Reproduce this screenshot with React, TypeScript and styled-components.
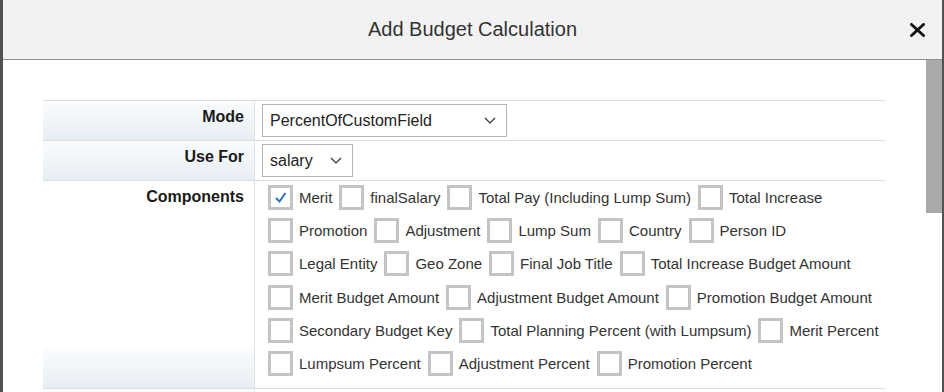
import styled, { createGlobalStyle } from "styled-components";

type Component = {
  name: string;
  checked?: boolean;
};

const components: Component[] = [
  { name: "Merit", checked: true },
  { name: "finalSalary" },
  { name: "Total Pay (Including Lump Sum)" },
  { name: "Total Increase" },
  { name: "Promotion" },
  { name: "Adjustment" },
  { name: "Lump Sum" },
  { name: "Country" },
  { name: "Person ID" },
  { name: "Legal Entity" },
  { name: "Geo Zone" },
  { name: "Final Job Title" },
  { name: "Total Increase Budget Amount" },
  { name: "Merit Budget Amount" },
  { name: "Adjustment Budget Amount" },
  { name: "Promotion Budget Amount" },
  { name: "Secondary Budget Key" },
  { name: "Total Planning Percent (with Lumpsum)" },
  { name: "Merit Percent" },
  { name: "Lumpsum Percent" },
  { name: "Adjustment Percent" },
  { name: "Promotion Percent" },
];

const Chevron = () => (
  <svg width="12" height="7" viewBox="0 0 12 7">
    <path d="M1 1 L6 6 L11 1" fill="none" stroke="#333" strokeWidth="1.2" />
  </svg>
);

const CloseIcon = () => (
  <svg width="15" height="14" viewBox="0 0 15 14">
    <path
      d="M1.5 1.5 L13.5 12.5 M13.5 1.5 L1.5 12.5"
      stroke="#111"
      strokeWidth="2.8"
      strokeLinecap="square"
    />
  </svg>
);

const Select = ({ value, width }: { value?: string; width: number }) => (
  <SelectBox $width={width}>
    <span>{value}</span>
    {value && <Chevron />}
  </SelectBox>
);

const App = () => {
  return (
    <>
      <GlobalStyle />
      <Page>
        <Edge $width={3} />
        <Dialog>
          <Header>
            <span />
            <Title>Add Budget Calculation</Title>
            <CloseButton aria-label="Close">
              <CloseIcon />
            </CloseButton>
          </Header>
          <Body>
            <Content>
              <Form>
                <Label>Mode</Label>
                <Value>
                  <Select value="PercentOfCustomField" width={245} />
                </Value>
                <Label>Use For</Label>
                <Value>
                  <Select value="salary" width={91} />
                </Value>
                <Label>Components</Label>
                <Value $tall>
                  <CheckList>
                    {components.map((c) => (
                      <CheckItem key={c.name}>
                        <Box>
                          {c.checked && (
                            <svg width="19" height="19" viewBox="0 0 19 19">
                              <path
                                d="M5 10 L8.5 13.5 L14.5 5"
                                fill="none"
                                stroke="#2f6fb5"
                                strokeWidth="2"
                              />
                            </svg>
                          )}
                        </Box>
                        {c.name}
                      </CheckItem>
                    ))}
                  </CheckList>
                </Value>
                <Label $plain />
                <Value>
                  <Select width={184} />
                </Value>
              </Form>
            </Content>
            <Scrollbar>
              <Thumb />
            </Scrollbar>
          </Body>
        </Dialog>
        <Edge $width={2} />
      </Page>
    </>
  );
};

const GlobalStyle = createGlobalStyle`
  body {
    margin: 0;
    font-family: "Liberation Sans", Arial, sans-serif;
  }
`;

const Page = styled.div`
  display: flex;
  width: 944px;
  height: 392px;
  overflow: hidden;
  background: #565656;
`;

const Edge = styled.div<{ $width: number }>`
  width: ${({ $width }) => $width}px;
  flex-shrink: 0;
  background: #525252;
`;

const Dialog = styled.div`
  flex: 1;
  display: flex;
  flex-direction: column;
  background: #fff;
  min-width: 0;
`;

const Header = styled.header`
  height: 59px;
  flex-shrink: 0;
  display: grid;
  grid-template-columns: 1fr auto 1fr;
  align-items: center;
  background: #f2f2f2;
  border-bottom: 1px solid #8e8e8e;
`;

const Title = styled.h1`
  margin: 0;
  font-size: 20px;
  font-weight: 400;
  color: #333;
`;

const CloseButton = styled.button`
  justify-self: end;
  margin-right: 17px;
  padding: 0;
  border: 0;
  background: none;
  display: flex;
  cursor: pointer;
`;

const Body = styled.div`
  flex: 1;
  display: flex;
  min-height: 0;
`;

const Content = styled.div`
  flex: 1;
  padding: 40px 41px 0 40px;
  overflow: hidden;
`;

const Scrollbar = styled.div`
  width: 16px;
  flex-shrink: 0;
  background: #fff;
`;

const Thumb = styled.div`
  height: 153px;
  background: #a9a9a9;
`;

const Form = styled.div`
  display: grid;
  grid-template-columns: 212px 1fr;
  border-top: 1px solid #dcdcdc;
`;

const Label = styled.div<{ $plain?: boolean }>`
  padding: 7px 10px 0 0;
  text-align: right;
  font-size: 16px;
  line-height: 18px;
  font-weight: 700;
  color: #1a1a1a;
  border-right: 1px solid #dde3e8;
  border-bottom: 1px solid #dcdcdc;
  background: ${({ $plain }) =>
    $plain
      ? "#fcfdfe"
      : "#fff linear-gradient(to bottom, #fbfcfd, #e7eef3) no-repeat bottom / 100% 40px"};
`;

const Value = styled.div<{ $tall?: boolean }>`
  padding: ${({ $tall }) => ($tall ? "4px 0 12px 7px" : "3px 0 3px 7px")};
  border-bottom: 1px solid #dcdcdc;
`;

const SelectBox = styled.div<{ $width: number }>`
  box-sizing: border-box;
  width: ${({ $width }) => $width}px;
  height: 33px;
  padding: 0 10px 0 7px;
  display: flex;
  align-items: center;
  justify-content: space-between;
  border: 1px solid #b4b4b4;
  font-size: 16px;
  color: #222;
`;

const CheckList = styled.div`
  margin-left: 6px;
  display: flex;
  flex-wrap: wrap;
  row-gap: 8.2px;
  column-gap: 7px;
`;

const CheckItem = styled.label`
  height: 25px;
  display: flex;
  align-items: center;
  gap: 6px;
  font-size: 15px;
  color: #333;
  white-space: nowrap;
`;

const Box = styled.span`
  box-sizing: border-box;
  width: 25px;
  height: 25px;
  border: 3px solid #c4c4c4;
  display: flex;
  align-items: center;
  justify-content: center;
  background: #fff;
`;

export default App;
